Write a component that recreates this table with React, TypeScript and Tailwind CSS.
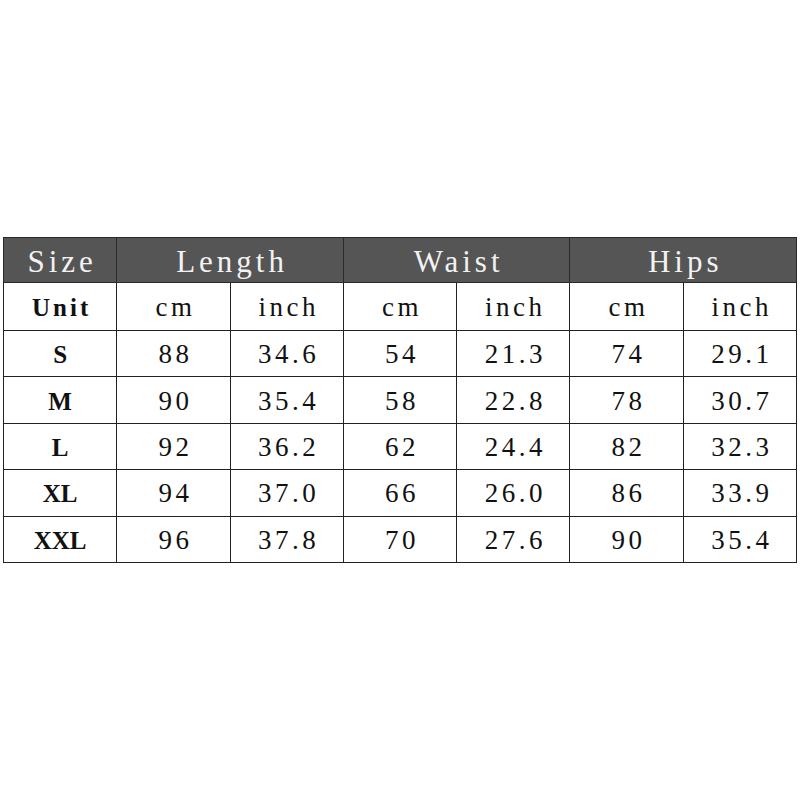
const HEAD = [
  { label: "Size", span: 1 },
  { label: "Length", span: 2 },
  { label: "Waist", span: 2 },
  { label: "Hips", span: 2 },
];

const ROWS: string[][] = [
  ["S", "88", "34.6", "54", "21.3", "74", "29.1"],
  ["M", "90", "35.4", "58", "22.8", "78", "30.7"],
  ["L", "92", "36.2", "62", "24.4", "82", "32.3"],
  ["XL", "94", "37.0", "66", "26.0", "86", "33.9"],
  ["XXL", "96", "37.8", "70", "27.6", "90", "35.4"],
];

const UNITS = ["cm", "inch", "cm", "inch", "cm", "inch"];

const cell =
  "border border-[#222] p-0 text-center leading-none font-['Liberation_Serif','DejaVu_Serif',serif]";

export default function App() {
  return (
    <div className="min-h-[800px] w-[800px] bg-white pl-[3px] pt-[237px] font-['Liberation_Serif','DejaVu_Serif',serif]">
      <table className="w-[794px] table-fixed border-collapse text-[#111] font-['Liberation_Serif','DejaVu_Serif',serif]">
        <thead>
          <tr className="h-[45px] bg-[#555555]">
            {HEAD.map((h) => (
              <th
                key={h.label}
                colSpan={h.span}
                className="border border-[#2a2a2a] p-0 pl-[4px] pt-[2px] text-center font-['Liberation_Serif','DejaVu_Serif',serif] text-[31px] font-normal leading-none tracking-[4px] text-[#f2f2f2]"
              >
                {h.label}
              </th>
            ))}
          </tr>
        </thead>
        <tbody>
          <tr className="h-[48px]">
            <td className={`${cell} pl-[3px] pt-[2px] text-[25px] font-bold tracking-[3px]`}>Unit</td>
            {UNITS.map((u, i) => (
              <td key={i} className={`${cell} pl-[4px] pt-[2px] text-[27px] tracking-[3.5px]`}>
                {u}
              </td>
            ))}
          </tr>
          {ROWS.map((row) => (
            <tr key={row[0]} className="h-[46.4px]">
              {row.map((c, i) => (
                <td
                  key={i}
                  className={
                    i === 0
                      ? `${cell} pt-[2px] text-[25px] font-bold`
                      : `${cell} pl-[4px] pt-[2px] text-[27px] tracking-[3.5px]`
                  }
                >
                  {c}
                </td>
              ))}
            </tr>
          ))}
        </tbody>
      </table>
    </div>
  );
}
